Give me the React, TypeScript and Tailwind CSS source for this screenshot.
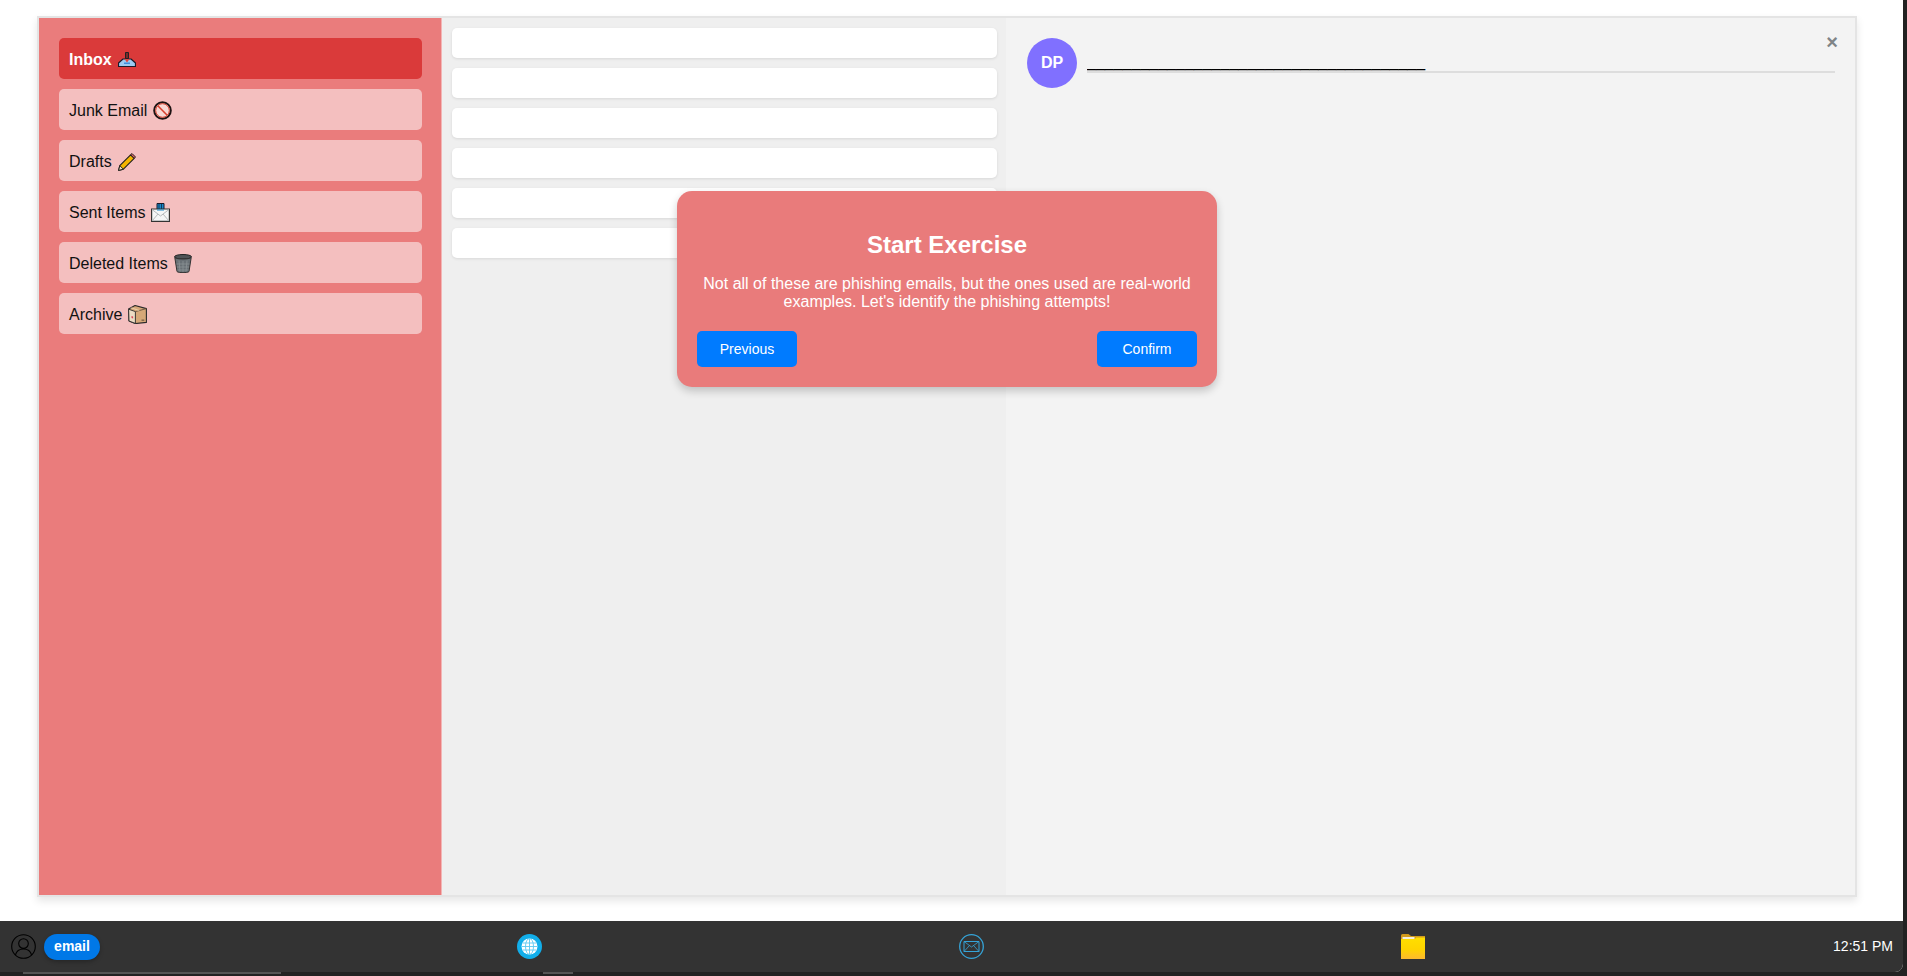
import React from "react";

const InboxIcon = () => (
  <svg width="18" height="15" viewBox="0 0 18 15" className="shrink-0">
    <path d="M7.500 0.500h3v6h-3z" fill="#7a2a2a" stroke="#222" strokeWidth="1" />
    <path d="M5 7h8l4.500 4v3.500H0.500V11z" fill="#9ccbf0" stroke="#1b1b2a" strokeWidth="1.200" strokeLinejoin="round" />
    <path d="M6.500 7h5L9 10.500z" fill="#e0473f" />
    <path d="M6 10.500h6v1.500H6z" fill="#3f8fdc" />
  </svg>
);

const JunkIcon = () => (
  <svg width="19" height="19" viewBox="0 0 19 19" className="shrink-0">
    <circle cx="9.500" cy="9.500" r="8.300" fill="#f8d8d4" stroke="#1d1212" strokeWidth="2" />
    <circle cx="9.500" cy="9.500" r="6.800" fill="none" stroke="#d8412f" strokeWidth="1" />
    <path d="M4.800 4.800l9.400 9.400" stroke="#d8412f" strokeWidth="1.600" />
  </svg>
);

const PencilIcon = () => (
  <svg width="18" height="18" viewBox="0 0 18 18" className="shrink-0">
    <path d="M0.600 17.400l1.200-4.800L12.600 1.800l3.600 3.600L5.400 16.200z" fill="#f4b400" stroke="#222" strokeWidth="1.100" strokeLinejoin="round" />
    <path d="M12.600 1.800l1.400-1.300 3.500 3.500-1.300 1.400z" fill="#e0605f" stroke="#222" strokeWidth="1" strokeLinejoin="round" />
    <path d="M0.600 17.400l1.200-4.800 3.600 3.600z" fill="#f3dcb4" stroke="#222" strokeWidth="1" strokeLinejoin="round" />
  </svg>
);

const SentIcon = () => (
  <svg width="19" height="19" viewBox="0 0 19 19" className="shrink-0">
    <path d="M6 0.500h7v7H6z" fill="#1b88c9" stroke="#1a1a2a" strokeWidth="1" />
    <path d="M8 1v6M10.500 1v6" stroke="#0d3d5e" strokeWidth="1" />
    <path d="M0.600 6h17.800v12.400H0.600z" fill="#f4f6f7" stroke="#333" strokeWidth="1.200" />
    <path d="M6 6.500h7v1H6z" fill="#1b88c9" />
    <path d="M1 6.500l8.500 6.500L18 6.500M1 18l6-7M18 18l-6-7" fill="none" stroke="#b5b9bc" strokeWidth="1" />
  </svg>
);

const TrashIcon = () => (
  <svg width="18" height="19" viewBox="0 0 18 19" className="shrink-0">
    <ellipse cx="9" cy="2.800" rx="8.500" ry="2.300" fill="#4f5356" stroke="#222" strokeWidth="1" />
    <path d="M0.800 3.500l2.200 14c1 1.500 11 1.500 12 0l2.200-14c-2 2-14.400 2-16.400 0z" fill="#697075" stroke="#333" strokeWidth="1" />
    <path d="M5 6.500l1 11M9 7v11M13 6.500l-1 11M2.500 10h13M3 13h12M3.500 16h11" stroke="#8b9296" strokeWidth="0.800" />
  </svg>
);

const BoxIcon = () => (
  <svg width="19" height="19" viewBox="0 0 19 19" className="shrink-0">
    <path d="M0.600 4l6.400-3.500L18.400 3.600V17.400l-11 1.200L1 16z" fill="#d6a878" stroke="#2a2a2a" strokeWidth="1.100" strokeLinejoin="round" />
    <path d="M0.600 4.200L7.400 6.600V18.400L1 16z" fill="#eddcc4" stroke="#2a2a2a" strokeWidth="0.900" />
    <path d="M7.400 6.600L18.400 3.600" fill="none" stroke="#66513c" strokeWidth="0.900" />
    <path d="M4 2.500l8 2.800-1.800 0.500-8-2.700z" fill="#e9cfa9" />
    <path d="M3.500 11l1.600 0.600v2L3.500 13z" fill="#d8475a" />
    <path d="M13.500 14.500h2.800v1.400h-2.800z" fill="#7c6248" />
  </svg>
);

const mailboxes = [
  { label: "Inbox", icon: <InboxIcon />, active: true },
  { label: "Junk Email", icon: <JunkIcon /> },
  { label: "Drafts", icon: <PencilIcon /> },
  { label: "Sent Items", icon: <SentIcon /> },
  { label: "Deleted Items", icon: <TrashIcon /> },
  { label: "Archive", icon: <BoxIcon /> },
];

const UserIcon = () => (
  <svg width="25" height="25" viewBox="0 0 25 25" fill="none" stroke="#000" strokeWidth="1.100">
    <circle cx="12.500" cy="12.500" r="11.800" />
    <circle cx="12.500" cy="9.600" r="4.800" />
    <path d="M4.400 21c1-3.800 4.200-6 8.100-6s7.100 2.200 8.100 6" />
  </svg>
);

const GlobeIcon = () => (
  <svg width="25" height="25" viewBox="0 0 25 25">
    <circle cx="12.500" cy="12.500" r="12.500" fill="#12aeea" />
    <circle cx="12.500" cy="12.500" r="8" fill="#ffffff" />
    <g fill="none" stroke="#5cc8f2" strokeWidth="0.900">
      <ellipse cx="12.500" cy="12.500" rx="4" ry="8" />
      <path d="M12.500 4.500v16M4.500 12.500h16M5.500 9h14M5.500 16h14" />
    </g>
  </svg>
);

const MailIcon = () => (
  <svg width="25" height="25" viewBox="0 0 25 25" fill="none" stroke="#35a4d8">
    <circle cx="12.500" cy="12.500" r="11.800" strokeWidth="1.300" />
    <path d="M5 7.500h15v10H5z" strokeWidth="1" />
    <path d="M5 7.500l7.500 5.500L20 7.500M5 17.500l5.500-6M20 17.500l-5.500-6" strokeWidth="0.800" />
  </svg>
);

const FolderIcon = () => (
  <svg width="24" height="25" viewBox="0 0 24 25">
    <defs>
      <linearGradient id="folderFill" x1="0" y1="0" x2="0" y2="1">
        <stop offset="0" stopColor="#ffdf00" />
        <stop offset="0.55" stopColor="#ffd400" />
        <stop offset="1" stopColor="#fdb92f" />
      </linearGradient>
    </defs>
    <path d="M0 1.500Q0 0 1.500 0h6L10 2h14v23H0z" fill="#d19a1c" />
    <path d="M1.500 3h12v3h-12z" fill="#f3efe0" />
    <path d="M0 5h14l1-1.500h9V25H0z" fill="url(#folderFill)" />
  </svg>
);

export default function App() {
  return (
    <div className="h-screen overflow-hidden bg-[#222222] font-['Liberation_Sans',Arial,sans-serif]">
      <div className="flex h-[972px] w-[1903px] flex-col overflow-hidden rounded-br-lg bg-white">
        <div className="flex-1 pl-[37px] pt-[16px]">
          <div className="relative flex h-[881px] w-[1820px] border-2 border-[#e4e4e4] shadow-[0_4px_8px_rgba(0,0,0,0.1)]">
            <aside className="flex w-[403px] shrink-0 flex-col gap-[10px] border-r border-[#f3b5b5] bg-[#ea7c7c] py-[20px] pl-[20px] pr-[19px]">
              {mailboxes.map((m) => (
                <div
                  key={m.label}
                  className={
                    m.active
                      ? "flex h-[41px] items-center gap-[6px] rounded-[5px] bg-[#da3a3a] px-[10px] pt-[2px] text-[16px] font-bold text-white"
                      : "flex h-[41px] items-center gap-[6px] rounded-[5px] bg-[#f4bfbf] px-[10px] pt-[2px] text-[16px] text-[#111111]"
                  }
                >
                  {m.label}
                  {m.icon}
                </div>
              ))}
            </aside>

            <section className="flex w-[564px] shrink-0 flex-col gap-[10px] bg-[#efefef] py-[10px] pl-[10px] pr-[9px]">
              {[0, 1, 2, 3, 4, 5].map((i) => (
                <div key={i} className="h-[30px] rounded-[5px] bg-white shadow-[0_1px_3px_rgba(0,0,0,0.1)]" />
              ))}
            </section>

            <section className="relative flex-1 bg-[#f3f3f3] py-[20px] pl-[21px] pr-[20px]">
              <div className="flex gap-[10px]">
                <div className="flex h-[50px] w-[50px] shrink-0 items-center justify-center rounded-full bg-[#8070ff] text-[16px] font-bold text-white">
                  DP
                </div>
                <div className="h-[35px] flex-1 overflow-hidden border-b-2 border-[#dddddd] pt-[15px] text-[16px] leading-[18px] text-black">
                  ______________________________________
                </div>
              </div>
              <button className="absolute right-[17px] top-[12px] text-[20px] font-bold leading-[24px] text-[#7f8487]">×</button>
            </section>

            <div className="absolute left-[638px] top-[173px] flex h-[196px] w-[540px] flex-col rounded-[15px] bg-[#e97b7b] p-[20px] text-center text-white shadow-[0_4px_8px_rgba(0,0,0,0.2)]">
              <h2 className="mt-[20px] text-[24px] font-bold leading-[27px]">Start Exercise</h2>
              <p className="mt-[17px] text-[16px] leading-[18px]">
                Not all of these are phishing emails, but the ones used are real-world examples. Let's identify the phishing attempts!
              </p>
              <div className="mt-auto flex justify-between">
                <button className="h-[36px] w-[100px] rounded-[5px] bg-[#007bff] text-[14px] text-white">Previous</button>
                <button className="h-[36px] w-[100px] rounded-[5px] bg-[#007bff] text-[14px] text-white">Confirm</button>
              </div>
            </div>
          </div>
        </div>

        <footer className="flex h-[51px] shrink-0 items-center bg-[#333333]">
          <div className="flex w-[308px] shrink-0 items-center gap-[8px] pl-[11px]">
            <UserIcon />
            <span className="flex h-[26px] w-[56px] items-center justify-center rounded-full bg-[#0078e7] text-[14px] font-bold text-white shadow-[0_2px_4px_rgba(0,0,0,0.25)]">
              email
            </span>
          </div>
          <div className="grid w-[1326px] shrink-0 grid-cols-3 justify-items-center">
            <GlobeIcon />
            <MailIcon />
            <FolderIcon />
          </div>
          <div className="flex-1 pr-[10px] text-right text-[14px] text-white">12:51 PM</div>
        </footer>
      </div>
      <div className="flex h-[4px] items-start">
        <div className="ml-[23px] h-[2px] w-[258px] bg-[#555555]" />
        <div className="ml-[262px] h-[2px] w-[30px] bg-[#555555]" />
      </div>
    </div>
  );
}
